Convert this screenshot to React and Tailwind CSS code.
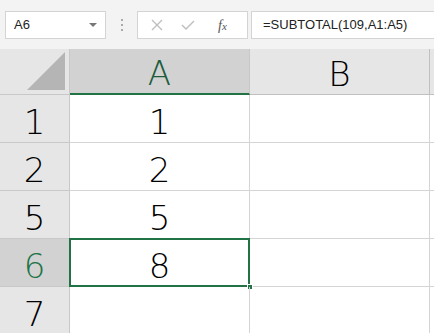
import React from "react";

const rows = [
  { n: "1", a: "1" },
  { n: "2", a: "2" },
  { n: "5", a: "5" },
  { n: "6", a: "8", sel: true },
  { n: "7", a: "" },
];

function App() {
  return (
    <div className="w-[434px] h-[333px] overflow-hidden bg-white" style={{ fontFamily: "'DejaVu Sans', sans-serif" }}>
      {/* formula bar */}
      <div className="h-[49px] bg-[#f3f3f3] flex items-start pt-[11px] pl-[5px]">
        <div className="w-[101px] h-[28px] bg-white border border-[#d4d4d4] flex items-center justify-between pl-[8px] pr-[8px] text-[13px] text-[#222]" style={{ fontFamily: "'Liberation Sans', sans-serif" }}>
          <span>A6</span>
          <span className="w-0 h-0 border-l-[4px] border-r-[4px] border-t-[4px] border-l-transparent border-r-transparent border-t-[#777]" />
        </div>
        <div className="w-[31px] h-[28px] flex flex-col items-center justify-center gap-[3px]">
          <span className="w-[2px] h-[2px] bg-[#aaa]" />
          <span className="w-[2px] h-[2px] bg-[#aaa]" />
          <span className="w-[2px] h-[2px] bg-[#aaa]" />
        </div>
        <div className="w-[111px] h-[28px] bg-white border border-[#d4d4d4] flex items-center text-[#b8b8b8]">
          <svg width="12" height="12" viewBox="0 0 12 12" className="ml-[13px]" fill="none" stroke="#bdbdbd" strokeWidth="1.3">
            <path d="M1 1 L11 11 M11 1 L1 11" />
          </svg>
          <svg width="14" height="12" viewBox="0 0 14 12" className="ml-[18px]" fill="none" stroke="#bdbdbd" strokeWidth="1.4">
            <path d="M1 6 L5 10 L13 2" />
          </svg>
          <span className="ml-[23px] text-[14px] italic text-[#555]" style={{ fontFamily: "'Liberation Serif', serif" }}>
            f<span className="text-[11px]">x</span>
          </span>
        </div>
        <div className="flex-1 h-[28px] ml-[3px] bg-white border border-[#d4d4d4] border-r-0 flex items-center pl-[11px] text-[13px] text-[#222]" style={{ fontFamily: "'Liberation Sans', sans-serif" }}>
          =SUBTOTAL(109,A1:A5)
        </div>
      </div>

      {/* sheet */}
      <div className="grid grid-cols-[70px_180px_180px_1fr] text-[34px] font-extralight leading-none text-black">
        <div className="h-[46px] bg-[#e6e6e6] border-r border-b border-[#c8c8c8] flex items-end justify-end pr-[4px] pb-[4px]">
          <svg width="38" height="38" viewBox="0 0 38 38">
            <polygon points="38,0 38,38 0,38" fill="#b5b5b5" />
          </svg>
        </div>
        <div className="h-[46px] bg-[#d2d2d2] border-r border-[#c8c8c8] border-b-[2px] border-b-[#217346] flex items-center justify-center pt-[4px] text-[#1d5c3c]">A</div>
        <div className="h-[46px] bg-[#e6e6e6] border-r border-b border-[#c0c0c0] flex items-center justify-center pt-[4px]">B</div>
        <div className="h-[46px] bg-[#e6e6e6] border-b border-[#c0c0c0]" />

        {rows.map((r) => (
          <React.Fragment key={r.n}>
            <div className={`h-[48px] border-r border-b border-[#c8c8c8] flex items-center justify-center pt-[6px] ${r.sel ? "bg-[#d2d2d2] text-[#217346]" : "bg-[#e6e6e6]"}`}>
              {r.n}
            </div>
            <div className="h-[48px] border-r border-b border-[#d4d4d4] relative flex items-center justify-center pt-[6px]">
              {r.a}
              {r.sel && (
                <>
                  <div className="absolute -left-[1px] -top-[1px] -right-[1px] -bottom-[1px] border-2 border-[#217346]" />
                  <div className="absolute -right-[4px] -bottom-[4px] w-[6px] h-[6px] bg-[#217346] border border-white" />
                </>
              )}
            </div>
            <div className="h-[48px] border-r border-b border-[#d4d4d4]" />
            <div className="h-[48px] border-b border-[#d4d4d4]" />
          </React.Fragment>
        ))}
      </div>
    </div>
  );
}

export default App;
